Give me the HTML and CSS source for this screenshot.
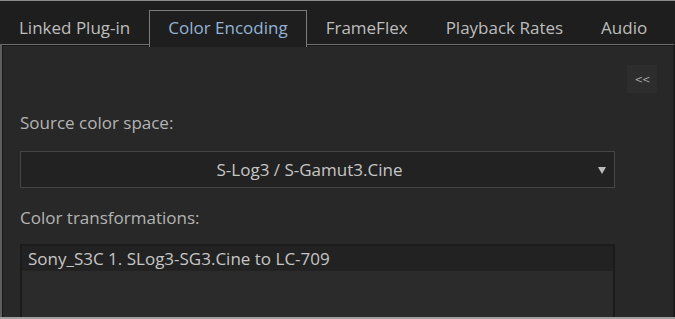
FILE: index.html
```html
<!DOCTYPE html>
<html lang="en">
<head>
  <meta charset="UTF-8" />
  <title>Color Encoding</title>
  <link rel="stylesheet" href="styles.css">
</head>
<body>
  <div class="window">
    <nav class="tabs">
      <span class="tab">Linked Plug-in</span>
      <span class="tab active">Color Encoding</span>
      <span class="tab">FrameFlex</span>
      <span class="tab">Playback Rates</span>
      <span class="tab">Audio</span>
    </nav>

    <main class="panel">
      <div class="panel-head">
        <button class="collapse">&lt;&lt;</button>
      </div>

      <div class="form">
        <label class="field-label">Source color space:</label>
        <div class="select">
          <span>S-Log3 / S-Gamut3.Cine</span>
          <span class="arrow"></span>
        </div>

        <label class="field-label">Color transformations:</label>
        <ul class="list">
          <li class="selected">Sony_S3C 1. SLog3-SG3.Cine to LC-709</li>
          <li></li>
        </ul>
      </div>
    </main>
  </div>
</body>
</html>
```

FILE: styles.css
```css
* {
  box-sizing: border-box;
}

body {
  margin: 0;
  font-family: "Open Sans", Arial, sans-serif;
  background-color: #1e1e1e;
  overflow: hidden;
}

.window {
  width: 675px;
  height: 319px;
  display: flex;
  flex-direction: column;
  border-top: 1px solid #8a8a8a;
  border-bottom: 2px solid #a0a0a0;
}

.tabs {
  display: flex;
  align-items: flex-end;
  height: 43px;
  padding-top: 8px;
  flex-shrink: 0;
  white-space: nowrap;
}

.tab {
  height: 34px;
  padding: 0 18px;
  font-size: 17px;
  line-height: 34px;
  color: #bdbdbd;
  border: 1px solid transparent;
  border-bottom: 0;
}

.tab.active {
  color: #93b3d6;
  border-color: #7c7c7c;
  height: 37px;
  margin-bottom: -3px;
  background-color: #1e1e1e;
  position: relative;
  z-index: 1;
}

.panel {
  flex: 1;
  display: flex;
  flex-direction: column;
  background-color: #282828;
  border-top: 1px solid #6e6e6e;
  border-left: 2px solid #5e5e5e;
  border-right: 2px solid #1c1c1c;
  box-shadow: inset 1px 1px 0 #181818;
  padding: 20px 16px 0 18px;
  overflow: hidden;
}

.panel-head {
  display: flex;
  justify-content: flex-end;
}

.collapse {
  width: 30px;
  height: 28px;
  padding: 0;
  border: 0;
  background-color: #2d2d2d;
  color: #a8a8a8;
  font-family: "DejaVu Sans", sans-serif;
  font-size: 10px;
  letter-spacing: -1px;
}

.form {
  width: 595px;
  display: flex;
  flex-direction: column;
}

.field-label {
  font-size: 17px;
  line-height: 19px;
  color: #b4b4b4;
  margin-top: 20px;
  margin-bottom: 19px;
}

.select {
  height: 37px;
  display: flex;
  align-items: center;
  justify-content: center;
  padding-right: 16px;
  position: relative;
  background-color: #222;
  border: 1px solid #454545;
  font-size: 17px;
  color: #c6c6c6;
}

.arrow {
  position: absolute;
  right: 8px;
  top: 15px;
  width: 0;
  height: 0;
  border-left: 4px solid transparent;
  border-right: 4px solid transparent;
  border-top: 7px solid #bcbcbc;
}

.form .field-label + .list {
  margin-top: -2px;
}

.list {
  list-style: none;
  margin: 0;
  padding: 0;
  height: 90px;
  border: 2px solid #1b1b1b;
  border-bottom: 0;
  background-color: #2b2b2b;
}

.list li {
  height: 25px;
  padding-left: 6px;
  font-size: 17px;
  line-height: 25px;
  color: #c6c6c6;
}

.list li.selected {
  background-color: #222;
}
```
